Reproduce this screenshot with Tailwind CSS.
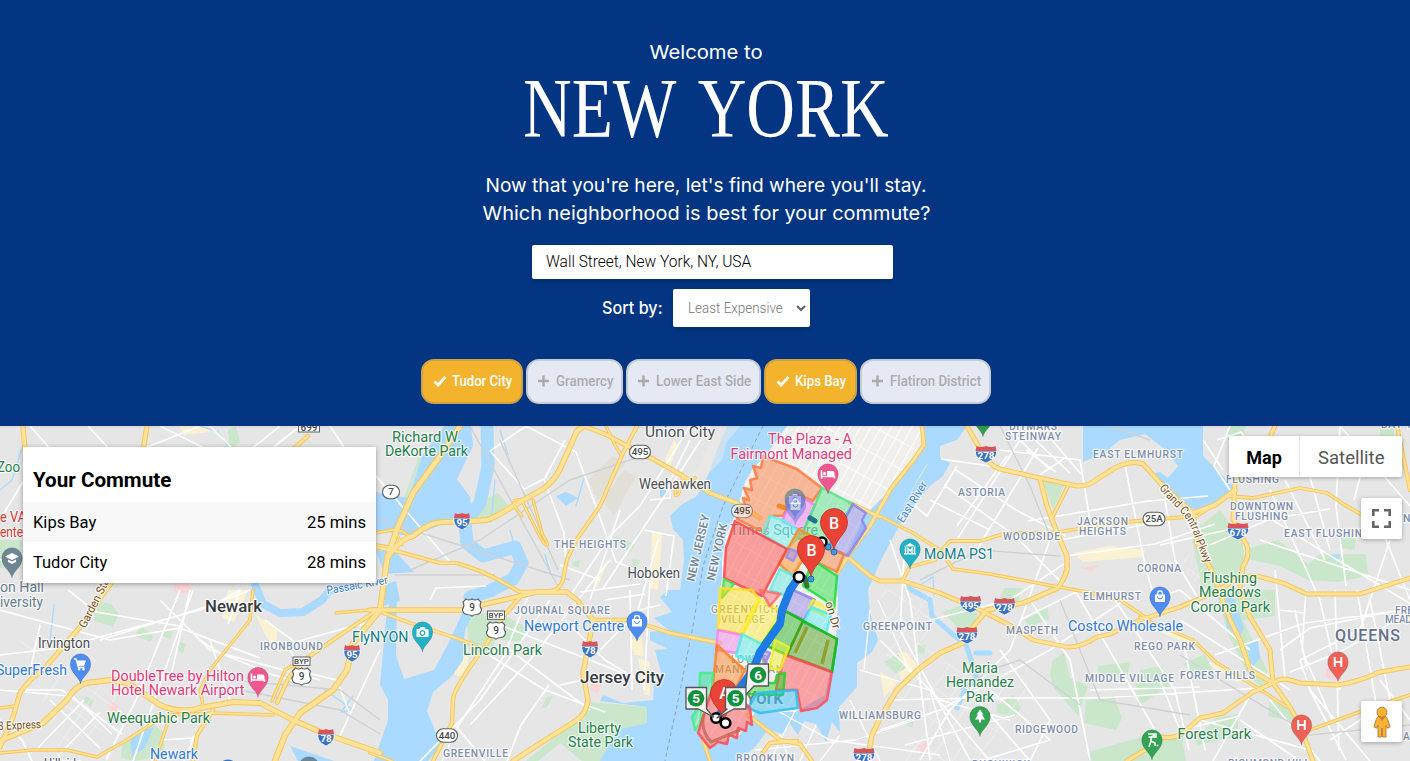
<!DOCTYPE html>
<html lang="en">
<head>
<meta charset="utf-8">
<title>Commute finder</title>
<script src="https://cdn.jsdelivr.net/npm/@tailwindcss/browser@4"></script>
</head>
<body class="h-[761px] w-[1410px] overflow-hidden flex flex-col bg-[#043582] font-['Roboto',sans-serif]">
<header class="h-[426px] shrink-0 flex flex-col items-center bg-[#043582] text-white">
  <p class="mt-[38px] ml-[2px] h-[30px] text-[19px] leading-[30px] font-['Inter',sans-serif] font-normal"><span class="fit inline-block whitespace-nowrap origin-center" data-w="113">Welcome to</span></p>
  <h1 class="-mt-[1px] ml-[2px] h-[83px] text-[84px] leading-[83px] font-['Liberation_Serif',serif]"><span class="fit inline-block whitespace-nowrap origin-center [word-spacing:10px]" data-w="366">NEW YORK</span></h1>
  <div class="mt-[22px] ml-[2px] flex flex-col items-center text-[19px] leading-[28px] font-['Inter',sans-serif] font-normal">
    <p><span class="fit inline-block whitespace-nowrap origin-center" data-w="441">Now that you're here, let's find where you'll stay.</span></p>
    <p><span class="fit inline-block whitespace-nowrap origin-center" data-w="448">Which neighborhood is best for your commute?</span></p>
  </div>
  <div class="mt-[17px] ml-[15px] w-[361px] h-[34px] bg-white rounded-[2px] shadow-md px-[14px] flex items-center text-[16px] font-light text-black"><span class="fit inline-block whitespace-nowrap origin-left" data-w="205">Wall Street, New York, NY, USA</span></div>
  <div class="mt-[10px] ml-[2px] flex items-center gap-[10px]">
    <span class="w-[61px] pt-[2px] text-[17px] font-['Inter',sans-serif] font-medium"><span class="fit inline-block whitespace-nowrap origin-left" data-w="61">Sort by:</span></span>
    <div class="w-[137px] h-[38px] bg-white rounded-[2px] shadow-md pl-[15px] pr-[4px] flex items-center justify-between text-[14px] font-light text-[#777]"><span class="fit inline-block whitespace-nowrap origin-left" data-w="95">Least Expensive</span>
      <svg width="10" height="8" viewBox="0 0 10 8" fill="none" stroke="#666" stroke-width="2.2"><path d="M1 2l4 4 4-4"/></svg></div>
  </div>
  <div class="mt-[32px] ml-[2px] flex gap-[3px] text-[14px] font-medium [&>div]:h-[45px] [&>div]:rounded-[13px] [&>div]:border-2 [&>div]:flex [&>div]:items-center [&>div]:pl-[10px] [&>div]:pb-[1px] [&>div]:gap-[5px]">
    <div class="w-[102px] bg-[#f4b32c] border-[#cda348]"><svg class="shrink-0" width="14" height="12" viewBox="0 0 14 12" fill="none" stroke="#fff" stroke-width="2.7"><path d="M1.5 6.5l3.6 3.5L12.5 2"/></svg><span class="fit whitespace-nowrap origin-left" data-w="60">Tudor City</span></div>
    <div class="w-[97px] bg-[#e4e9f4] border-[#c5cbd2] text-[#adadad]"><svg class="shrink-0 -ml-px" width="14" height="12" viewBox="0 0 14 12" fill="none" stroke="#aaa" stroke-width="2.5"><path d="M1 6h11M6.500 .5v11"/></svg><span class="fit whitespace-nowrap origin-left" data-w="57">Gramercy</span></div>
    <div class="w-[135px] bg-[#e4e9f4] border-[#c5cbd2] text-[#adadad]"><svg class="shrink-0 -ml-px" width="14" height="12" viewBox="0 0 14 12" fill="none" stroke="#aaa" stroke-width="2.5"><path d="M1 6h11M6.500 .5v11"/></svg><span class="fit whitespace-nowrap origin-left" data-w="95">Lower East Side</span></div>
    <div class="w-[93px] bg-[#f4b32c] border-[#cda348]"><svg class="shrink-0" width="14" height="12" viewBox="0 0 14 12" fill="none" stroke="#fff" stroke-width="2.700"><path d="M1.500 6.500l3.600 3.500L12.500 2"/></svg><span class="fit whitespace-nowrap origin-left" data-w="51">Kips Bay</span></div>
    <div class="w-[131px] bg-[#e4e9f4] border-[#c5cbd2] text-[#adadad]"><svg class="shrink-0 -ml-px" width="14" height="12" viewBox="0 0 14 12" fill="none" stroke="#aaa" stroke-width="2.500"><path d="M1 6h11M6.500 .5v11"/></svg><span class="fit whitespace-nowrap origin-left" data-w="91">Flatiron District</span></div>
  </div>
</header>

<main class="relative h-[335px] shrink-0 overflow-hidden">
<svg id="map" class="block" width="1410" height="335" viewBox="0 426 1410 335" font-family="Roboto, sans-serif">
  <defs>
    <pattern id="grid" width="9" height="24" patternUnits="userSpaceOnUse" patternTransform="translate(6 0) rotate(29)"><path d="M0 0V24M0 0H9" stroke="#fff" stroke-width="1.7"/></pattern>
    <pattern id="blocks" width="19" height="27" patternUnits="userSpaceOnUse" patternTransform="rotate(35)"><path d="M0 0V27M0 0H19" stroke="#fff" stroke-width="1.1"/></pattern>
    <path id="isle" d="M787 426L766 455 752 470 745 482 737 510 726 535 722 560 722 580 718 600 717 640 712 680 702 700 695 725 710 747 740 735 755 712 795 712 825 695 836 640 838 600 835 570 850 548 865 515 890 490 915 462 924 445 922 426Z"/>
    <g id="pin"><path d="M0 20C-1 13-10.300 9-10.300 0A10.300 10.300 0 0 1 10.300 0C10.300 9 1 13 0 20Z" fill="currentColor" stroke="#000" stroke-opacity=".12"/></g>
    <path id="gcp" d="M1159 488Q1166 497 1176 507 1190 521 1194 535 1198 549 1207 567"/>
  </defs>
  <rect y="426" width="1410" height="335" fill="#e6e6e6"/>
  <!-- commercial and urban tints -->
  <g fill="#fbf2d3">
    <path d="M180 426l25 0 5 6-26 3zM228 590h20l-14 32-12-4zM255 614l22 14 0 20-10-10zM455 655l14 2-4 20-10-2zM630 640l12-2 2 18-10-1zM638 658l12 4 0 34-6-2zM1073 553l36-7 36 4-2 7-60 5zM893 655l12-4 14 16-18 14zM880 672l18 10-14 16zM740 426l16 0-30 36-5-2zM665 460l9-20 4 5-9 24zM1140 616l54 22-4 7-50-22zM1205 662l14 2 22 15-3 4zM605 563l4-5-12 30-4-2zM652 532l10 2-4 56-8-2z"/>
  </g>
  <g fill="#f9d5d5"><path d="M174 583h16l2 12-18-3zM110 701l9 5-3 6-9-5zM593 681l9 3-4 9-8-3zM1326 668l12 3-3 10-9-3zM918 745l9-3 3 12-9 2zM1080 568l20-3-8 6z"/></g>
  <g fill="#e2dfd6"><path d="M588 480l24-24 14 6-28 38zM602 500l22-30 12 6-22 40z"/></g>
  <!-- parks -->
  <g fill="#cae7cc">
    <path d="M0 540h22v28H0zM228 430l8-4 4 16-10 8zM93 600l18 4 8 10-6 13-18-6zM141 626l12 9-2 7-16-6zM164 629l9 3-3 7-8-3zM180 642l6 2-3 9-5-2zM122 745l30-22 12 10 1 22-30 6-14-3zM86 696l8 5-4 6-7-6zM404 498l14-40 3 0-14 40zM475 518l13-20 10-5 10 12-18 12zM467 618l28-8 32 18-4 14-28-3-4 16-22-4zM547 697l6-1-6 11-6 1zM590 702l57 5v18l-29 5-16 31h-20l-22-18-22 18h-12l34-28 24-14zM615 536l20 8-4 8-19-10zM640 560l-10 25 3-26zM573 562l7-2-1 8-7-3zM1043 481l22 3-12 26zM1004 588h18l-4 14-18-4zM942 612l24-8 12 10-6 16-16-4zM1025 620l22-14 2 13-20 8zM1052 661l12-9 6 26 18 8-10 30-24-28-4-12zM1098 666l32-4-2 12-30 4zM1086 700l28-4 8 22-6 12-32-7zM1140 670l22-4 8 20-32 20-2-20zM1088 752l50-14 14-6v29h-60zM1195 530l25-20 22 30 4 30-20 20-24-2-10-50zM1215 590h60v26l-32 4 24 50-2 20-16-14-20-40zM1250 548l28-8 30 24 12-10 46 0 2 22-30 6-30-2-28-14-38-8zM1340 530l16 8-2 12-14-2zM1196 740l20-22 22-4 0 22-40 9zM1140 738h42l4 23h-46zM1270 700l22 8 2 14-26-6zM1183 664l22-10 10 22-16 4zM1228 426h18l-4 14-14 0zM1380 426h14v12h-14zM884 662l14-8 8 14-10 6zM908 720l6 0-2 7-5-2zM997 705l16-10 8 12-6 10-18-4zM918 645l8 0-2 9-6-1z"/>
  </g>
  <!-- water -->
  <g fill="#aadaff">
    <path d="M727 426H967L957 440 940 446 940 457 950 463 943 476 930 486 903 519 890 543 881 560 868 590 870 613 878 640 872 652 857 663 857 687 839 707 840 732 832 722 826 742 816 724 804 721 798 735 790 724 784 734 768 730 755 747 737 761H600L617 730 647 723 647 707 600 701 603 695 623 703 653 700 654 684 662 676 655 650 668 649 650 640 650 632 668 630 654 618 672 612 660 597 668 590 680 590 684 560 683 540 673 529 670 516 681 505 697 496 706 480 717 450Z"/>
    <path d="M460 426h11l2 20-16 33 13 18 2 19-30 8-24 11-18 0-24-6v-37l32 6 14-42 22-30zM376 494l12 2 10 18-8 18-14 0z"/>
    <path d="M386 620L392 590 397 590 396 655 404 679 434 670 447 646 460 618 470 590 480 600 465 630 463 660 452 676 433 692 427 711 433 725 440 747 428 761H374L388 720 388 700 380 685Z"/>
    <path d="M376 550l20 2 18 20-30 2zM382 585l14-4 4 20-20 6z"/>
    <path d="M1083 426H1203V456L1236 489 1215 506 1195 510 1180 502 1163 486 1152 474 1160 472 1168 478 1178 466 1166 450 1145 434 1120 440 1105 452 1083 462Z"/>
    <path d="M130 742l10-12 13-2-8 20-13 8zM290 746l44 15h-36zM1222 596l12 2 10 30-5 9-12-10zM1246 644l12-4 2 18-8 10zM556 496l10-4 12 6-12 8zM1330 555l10 0-2 5-8-2zM660 490h6v7h-6z"/>
  </g>
  <g fill="none" stroke="#aadaff" stroke-linecap="round" stroke-linejoin="round">
    <path stroke-width="13" d="M487 426L488 466 480 503 465 523 467 543 483 556 515 547 522 563 513 579 490 591 470 597"/>
    <path stroke-width="8" d="M255 585L263 604 280 613 303 612 322 600 330 590 347 588"/>
    <path stroke-width="5" d="M908 588L930 600 932 616 950 632 966 645 973 666 977 680 964 692 957 708M976 653L990 653"/>
    <path stroke-width="1.3" d="M584 478l-8 28M500 430l8 25M495 480l-4 42M510 530l4 14M640 532l-5 8M54 605l-4 36M325 690l28 20-12 2 12-16M200 426l18 6 10 14M0 490l12-10 10-32M545 555l6 20M920 585l13-8 1 18"/>
  </g>
  <use href="#isle" fill="#f0efec"/>
  <path d="M925 466L929 462 902 508 898 515Z" fill="#dfe3dd"/>
  <path d="M787 426H740L727 442 722 460 695 488 690 480 705 452 720 426Z" fill="#eceae5" opacity=".5"/>
  <!-- local streets -->
  <g fill="none" stroke="#fff" stroke-width="1.7" stroke-linejoin="round">
    <use href="#isle" fill="url(#grid)" stroke="none"/>
    <path d="M0 560L60 545M0 655L60 648 140 626 200 610 250 590M30 426L60 460M88 426l24 26M140 450l60-24M160 426l60 30M210 426l24 24M250 450l30-24M300 426l-30 24M330 426l40 60M0 520l30-50M0 610l110 30 70-12 80 30M180 590l-44 110-30 60M193 590l-60 171M160 600l50 50 110 30M100 640L215 604 240 590M190 590l-20 90M68 590l28 22 84 14M40 625l-14 65M22 690l40 0 60 44M50 700l50 48M68 692l44 42M84 700l-46 48M100 712l-42 44M0 690l70 6M220 700l-30 42M166 730l-14 31M210 640l20 60M200 640l22 15M213 650l60 25 36 10M265 620l30 22 44-12 32-8M285 642l18 30 34 8 12 32M380 650l-42 90M240 590l-12 34M160 740l34-2-10 23M0 720l22 20 10 21"/>
    <path d="M376 476L450 562M490 451l36-25 50 26 22 60 18 50 28 11M490 451l34 38 20-10 20 54 2 30M545 478l20-38M690 426l-50 80-30 30-40 60M710 426l-52 80-56 84M560 565l40 15M644 530l30 6-8 60M658 540l-20 70M620 510l-30 90M690 440l-20 40 0 18-20 2M430 600l6-12 50-2M528 596l-24 60-46 70-16 35M550 600l-70 100-60 61M610 560l-80 100-60 65M510 650l80 60M500 625l90 35 50 20M465 640l80 50 60 22M455 725l30 36M549 685l-28 40-14 36M565 620l40 40 36 22M560 685l46-10M580 592l60-8M630 590l2 100M650 580l-6 110M600 650l40-40 20-5M605 600l40-6"/>
    <path d="M941 459l42 6 36 6M956 470l60 40 50 26M944 485l70 50 50 50M930 500l60 30M905 520l10-14 12 10 30-50M1007 456l-50 70M1020 440l-62 98M1038 448l-60 100M1015 435l35 35M1030 435l40 38M1045 432l36 42M1000 450l80 10 10 60M1026 450l30 22M1065 458l-30 20M1028 521l120-20 60-5M1060 540l110-20M1065 556l90-12 60-20M1125 465l20 100 14 50M1165 500l10 60 30 50M890 540l20 60 20 160M905 540l-5 90 70 130M880 640l60 60 70 20M1050 540l-40 110-60 60-30 50M1070 560l-60 40-80 20M1030 600l40 60 20 100M890 700l80-2 130 0 160-10M880 730l60-20 110-60 90-60M930 690l60 71M960 680l70 81M990 690l60 50-70 21M905 745l110-30M1075 590l80 140M1000 650l50 70-20 41M1080 590l-60 30M1115 600l60 90 14 60M1090 690l110-3M1230 426l-16 40 20 30 80 50 100 60M1300 440l30 110M1270 490l50 110 20 90M1285 480l40 80M1340 426l-4 80 10 80M1210 545l60-26 60-10M1160 545l80-18M1260 540l60 20 90 30M1370 440l-16 60M1370 500l40 100M1390 540l-30 90-60 30M1275 570l10 110M1295 610l12 60M1306 590l-4 60 30 70M1335 590l4 160M1357 590l20 120M1280 610l24 3M1215 655l90-32 100-13M1280 650l30-22 100-20M1290 672l50-20 70-40M1185 650l20 100M1160 680l20 50 60-14M1200 720l110 30M1253 690l-40 71M1240 720l60 41M1270 700l50 61M1310 690l60 71M1300 660l10 30 36 70M1150 600l30-10 70 60M1180 620l110 70M1380 680l30 40M1370 600l20 100-60 40M1340 426l70 80M1217 440l24-8 20 30M1203 440l20 30"/>
    <path stroke-width="1.3" d="M740 690l90 50M770 761l30-60M800 761l16-36M840 735l-20 26M850 700l30 61M860 670l70 20 20 71M870 610l-6 60M878 600l36 80M755 750l100-10 60-20M780 735l10 26M830 740l110 15"/>
  </g>
  <path d="M1170 540l40 30-10 20zM880 590H935V700H890ZM940 660L1030 690 980 761H900ZM20 640L90 650 130 720 60 750Z" fill="url(#blocks)" opacity=".55"/>
  <!-- railways and borders -->
  <g fill="none" stroke="#cfd2d5" stroke-width="1.4">
    <path d="M470 426L560 590M500 440l58 130M380 520l190 60M230 680l110 10 40 30M395 575l100 0M240 690l100 20 40 24M1000 426l30 60 20 50M920 580l60-30 80 6M1060 600l40 100 90 15M1180 655l130 80 100-10M1150 440l-40-14M960 690l30-20 30-10 60 45M410 570l70-30 90-60 66-22"/>
    <path stroke="#8fa2b3" stroke-dasharray="4 3" stroke-width="1" d="M763 426l-20 40-20 40-20 60-10 60-14 70-14 65"/>
  </g>
  <g id="roads" fill="none" stroke-linejoin="round" stroke-linecap="round"></g>

  <!-- neighbourhood areas -->
  <g id="labels-under"></g>
  <g id="zones" stroke-width="2.5" stroke-linejoin="round" fill-opacity=".47" stroke-opacity=".85"></g>
  <g fill="none" stroke-linecap="round" stroke-width="5"><path stroke="#ef8a2b" d="M779 506l6 2"/><path stroke="#23728f" d="M810 518l5 3"/><path stroke="#337735" d="M805 578l2 8"/></g>
  <path d="M799 577L790 590 782 610 780 624 760 652 753 670 740 688 717 718" fill="none" stroke="#1c7be4" stroke-width="8" stroke-linejoin="round"/>
  <g id="labels"></g>
  <g id="pois"></g>

  <!-- commute markers -->
  <g fill="#3b9be0" stroke="#1f6fa8"><circle cx="828" cy="547" r="3"/><circle cx="834" cy="552" r="3"/><circle cx="811" cy="579" r="3"/><circle cx="803" cy="578" r="3"/></g>
  <g fill="#fff" stroke="#000" stroke-width="2.6"><circle cx="822" cy="542" r="4.500"/><circle cx="799" cy="577" r="5"/></g>
  <g fill="#ea4335" stroke="#b9302a" stroke-width=".8">
    <path d="M834 550C832 538 820.500 534 820.500 522A13.500 13.500 0 0 1 847.500 522C847.500 534 836 538 834 550Z"/>
    <path d="M811 577C809 565 797.500 561 797.500 549A13.500 13.500 0 0 1 824.500 549C824.500 561 813 565 811 577Z"/>
    <path d="M724 721C722 709 710.500 705 710.500 693A13.500 13.500 0 0 1 737.500 693C737.500 705 726 709 724 721Z"/>
  </g>
  <g fill="#fff" font-size="16" font-weight="500" text-anchor="middle"><text x="834" y="528.500">B</text><text x="811.500" y="555.500">B</text><text x="724.500" y="699">A</text></g>
  <g fill="#fff" stroke="#000" stroke-width="2.600"><circle cx="716" cy="718" r="4.800"/><circle cx="725.500" cy="723" r="4.800"/></g>
  <g fill="#f3f3f3" stroke="#555" stroke-width="1.300" stroke-linejoin="round">
    <path d="M748 664h20.500v22H754l-12 13 4-13z"/>
    <path d="M686 687.500h20.500V709l7 8-15-8H686z"/>
    <path d="M725.500 687.500h20.500V709H734l-17 9 10-9h-1.500z"/>
  </g>
  <g fill="#12913f"><circle cx="758" cy="675" r="8.300"/><circle cx="696" cy="698.300" r="8.300"/><circle cx="735.500" cy="698.300" r="8.300"/></g>
  <g fill="#fff" font-size="13.500" font-weight="700" text-anchor="middle"><text x="758" y="680">6</text><text x="696" y="703">5</text><text x="735.500" y="703">5</text></g>
  <path d="M0 426H1410V428H0Z" fill="#000" opacity=".04"/>
</svg>

<section class="absolute left-[23px] top-[21px] w-[353px] h-[136px] bg-white shadow-[0_1px_5px_rgba(0,0,0,.35)] flex flex-col text-black">
  <h2 class="h-[55px] shrink-0 pl-[10px] pt-[10px] flex items-center text-[20px] font-bold"><span class="fit whitespace-nowrap origin-left" data-w="138">Your Commute</span></h2>
  <div class="h-[40px] px-[10px] pt-[1px] flex items-center justify-between bg-[#f8f8f8] text-[16px]"><span class="fit whitespace-nowrap origin-left" data-w="63">Kips Bay</span><span class="fit whitespace-nowrap origin-right" data-w="59">25 mins</span></div>
  <div class="h-[41px] px-[10px] flex items-center justify-between text-[16px]"><span class="fit whitespace-nowrap origin-left" data-w="74">Tudor City</span><span class="fit whitespace-nowrap origin-right" data-w="59">28 mins</span></div>
</section>
<div class="absolute left-[1229px] top-[10px] flex h-[41px] w-[173px] rounded-[2px] bg-white text-[18px] shadow-[0_1px_4px_rgba(0,0,0,.3)]">
  <div class="w-[71px] flex items-center justify-center border-r border-[#e8e8e8] pt-[1px] font-bold text-black"><span class="fit whitespace-nowrap" data-w="36">Map</span></div>
  <div class="flex-1 pt-[1px] flex items-center justify-center text-[#565656]"><span class="fit whitespace-nowrap" data-w="66">Satellite</span></div>
</div>
<div class="absolute left-[1361px] top-[72px] size-[41px] flex items-center justify-center rounded-[2px] bg-white shadow-[0_1px_4px_rgba(0,0,0,.3)]">
  <svg width="19" height="19" viewBox="0 0 19 19" fill="none" stroke="#666" stroke-width="2.600"><path d="M1.300 7V1.300H7M12 1.300h5.700V7M17.700 12v5.700H12M7 17.700H1.300V12"/></svg>
</div>
<div class="absolute left-[1361px] top-[275px] size-[41px] flex items-center justify-center rounded-[2px] bg-white shadow-[0_1px_4px_rgba(0,0,0,.3)]">
  <svg width="18" height="32" viewBox="0 0 18 32" fill="#f9b233" stroke="#a87a3a" stroke-width=".9"><path d="M5 10.500h8l1.800 3L17 21l-2.500 1.200L13 19.500V31H9.700L9 22l-.7 9H5V19.500L3.500 22.200 1 21l2.200-7.500Z"/><path d="M5.500 10.500h7L9 15Z" fill="#e1782b" stroke="none"/><circle cx="9" cy="6.200" r="5"/></svg>
</div>
</main>

<script>
const el = (parent, tag, attrs, text) => {
  const n = document.createElementNS('http://www.w3.org/2000/svg', tag);
  for (const k in attrs) n.setAttribute(k, attrs[k]);
  if (text !== undefined) n.textContent = text;
  (typeof parent === 'string' ? document.getElementById(parent) : parent).appendChild(n);
  return n;
};
const road = (d, w) => ({ d: 'M' + d, w });
const roads = [
  road('23 426L25 450',5), road('147 426L143 450',5), road('308 436L292 450',4),
  road('460 426L440 456 413 493 397 529 387 559 382 596 380 610 353 643 347 670 333 690 300 713 285 735 275 761',6),
  road('387 559Q398 540 413 536 430 522 443 522T487 520Q500 515 513 506L543 489Q555 480 560 469L577 431 584 426',5.5),
  road('584 426L605 434 627 446 653 459 683 476 710 493 737 503 760 518',4.5),
  road('637 426L623 453 600 506 577 539 567 559 563 580Q560 590 550 591L520 592 497 579 480 571 457 563 440 563 400 552 370 546',3.8),
  road('376 533L392 530 402 531 412 538',3), road('376 545L395 548',3), road('395 530L402 545',2.5),
  road('522 516Q510 502 516 500 522 498 524 505L540 537Q546 547 547 545 549 544 543 536L533 500',2.8),
  road('683 476Q680 495 677 495 674 498 676 484L695 478',3.2),
  road('606 426L615 445 621 455',3),
  road('370 610L460 610Q485 604 503 600L537 592 567 592 577 600 593 620 587 653 583 673 588 700Q586 714 577 720L550 737 513 761',5),
  road('593 620L630 620 670 633 720 643',4),
  road('520 597L503 617 487 643 470 667Q453 692 453 700L452 723 433 761',4),
  road('383 613L410 623 453 637 475 645',3.5), road('370 753L392 761',3),
  road('0 747L13 717 20 693Q30 678 43 670L80 627 98 601 112 582',4.8),
  road('0 741L43 723 67 700Q77 682 95 682L110 680Q128 681 138 690L160 705Q180 714 200 708L233 702 260 703 293 720 323 733 380 753',5.5),
  road('277 703L288 679 300 663 333 640 377 610',4), road('272 701L285 670 302 660',3),
  road('253 590L250 620 210 670 200 690 203 705',3),
  road('0 753L33 750 67 750 97 757 127 740 153 723 170 715 213 713 273 715',3.2),
  road('213 710L197 735 193 761',4), road('170 716L155 761',3), road('0 708L15 706',3), road('336 613L380 609',3),
  road('967 426L980 449Q988 465 1000 469L1040 478 1077 486Q1090 486 1097 479L1115 468Q1130 460 1143 464L1163 486 1193 513Q1196 530 1197 543L1213 573 1230 620 1240 640 1250 670 1273 683',4.8),
  road('1040 479L1047 506 1057 533 1067 556 1067 570Q1060 590 1053 590L1023 603 987 610 973 627 963 643 940 653 920 668 897 690 880 718 872 735 867 761',5),
  road('880 516L913 533 940 550 953 569 990 574 1053 586 1087 592 1120 600 1145 617',3.2),
  road('850 559L870 576 880 581 903 581 940 593 980 610 1013 627 1033 640 1067 647Q1080 648 1097 637L1110 634 1140 620 1180 607 1215 592 1240 577 1257 576 1283 583 1307 594 1360 594 1410 578',4.4),
  road('903 579L910 567 935 560 943 549 950 541 980 541 1007 533 1053 533 1113 523 1197 516 1227 496 1253 498 1300 488 1327 493 1345 505 1364 516',3.4),
  road('1275 426L1260 460 1235 483 1233 519 1247 546Q1250 556 1243 566L1240 590 1250 617 1270 650 1273 683 1290 707 1300 725 1313 761',4.6),
  road('1273 683Q1282 677 1290 680L1300 683 1337 685Q1355 683 1380 672L1410 667',4.6),
  road('1273 683L1253 692 1223 713 1200 718 1183 733Q1175 739 1160 737L1150 747 1127 761',4.6),
  road('1140 617L1193 640 1217 663 1253 685 1287 707',3), road('1410 695L1373 707 1310 730',3.2),
  road('1397 426L1410 490',4), road('1068 486L1053 516',3.6), road('1193 513L1215 505 1235 490',5),
  road('922 426L924 445 912 462 890 490 880 508 870 526 850 553 838 572',4.2),
  road('850 503L880 517',4), road('748 715L780 740 800 744 812 761',4), road('757 761L770 743 797 741',4), road('703 740L710 761',3.5)
];
for (const r of roads) el('roads','path',{d:r.d,stroke:'#f6c659','stroke-width':r.w+0.4});
for (const r of roads) el('roads','path',{d:r.d,stroke:'#fde298','stroke-width':Math.max(r.w-1.5,1.3)});

const zones = [
 ['#ff7a3c','763,456 797,469 822,488 813,501 795,493 783,516 770,516 765,533 737,519 741,507 746,509 743,498 749,500 744,488 752,490 750,480 757,478 753,466 761,468'],
 ['#e97cf5','795,493 815,505 803,532 782,521'],
 ['#4fe585','822,488 853,504 830,548 797,538 803,532 815,505'],
 ['#8b86ee','853,504 866,513 862,520 866,528 848,556 828,547'],
 ['#63f0ee','770,516 785,521 802,533 787,549 762,534'],
 ['#ff8b1a','799,529 815,538 793,576 779,564'],
 ['#9a8cf0','790,549 798,552 793,561 786,557'],
 ['#ff4444','735,521 787,549 762,596 724,578 726,548'],
 ['#5fe9e2','780,569 797,577 787,596 770,590'],
 ['#ff7c3a','817,546 844,554 837,572 813,560'],
 ['#1fdc3c','813,560 837,576 834,610 825,600 803,586'],
 ['#4ddb50','724,579 734,584 722,598'],
 ['#ffe11c','720,588 752,590 760,600 743,634 718,630'],
 ['#ffef3c','758,599 780,610 762,644 740,634'],
 ['#ff6a6a','760,590 780,594 770,606'],
 ['#8c84e8','793,590 815,600 804,620 785,611'],
 ['#f7ee32','813,600 829,609 823,615 809,608'],
 ['#52ebf0','811,607 831,615 826,633 804,623'],
 ['#1fb51c','785,611 803,621 787,655 762,644 780,625'],
 ['#46a018','803,621 837,639 832,672 787,655'],
 ['#ff4c55','785,655 832,672 827,700 817,708 801,711 797,690 776,690 780,670'],
 ['#f184ef','718,630 742,635 737,653 716,650'],
 ['#52edf1','742,634 762,644 753,662 736,656'],
 ['#9b87e8','762,650 770,653 765,664'],
 ['#eef22b','775,640 789,647 785,657 780,670 770,668'],
 ['#ff7f1d','717,645 745,670 736,688 713,683'],
 ['#27ce28','750,683 775,683 777,675 785,673 783,695 748,694'],
 ['#2dbdf0','757,693 796,690 798,708 760,713 748,708'],
 ['#4bea86','700,673 713,673 711,694 702,707 700,724 695,730 692,717 699,706'],
 ['#ff4b52','711,693 730,690 750,708 752,725 747,722 746,731 738,728 737,738 729,735 727,744 718,742 710,748 698,733 704,714']
];
for (const [c,p] of zones) el('zones','polygon',{points:p,fill:c,stroke:c});
el('zones','path',{d:'M807 627L795 653M828 640L822 664',stroke:'#8b9c20','stroke-width':3.5,fill:'none'});
el('zones','path',{d:'M785 611L837 639 832 672M785 611L762 644',stroke:'#15bd20','stroke-width':2.5,fill:'none'});
el('zones','path',{d:'M704 714Q700 730 711 742L740 730',stroke:'#c46a5c','stroke-width':3,fill:'none'});

const kind = {
  park:['#26804a',14.3,400], town:['#4b5057',14.3,400], city:['#373c43',16.8,500], area:['#7d8eab',10.3,500],
  shop:['#2f79dc',14.3,400], hotel:['#e5397b',14.3,400], teal:['#12808a',14.3,400], grey:['#667d8c',14.3,400],
  red:['#d43a31',14.3,400], road:['#7a5126',11.5,400], water:['#3b82c9',11.5,400], under:['#6f9299',15,400],
  state:['#73828f',11.5,500], boro:['#63728a',16,500], dim:['#a7a18c',10.3,500], faded:['#6d8794',18,500]
};
const L = [
 ['Richard W.',392,461,441.5,'park'],['DeKorte Park',385,468,456,'park'],['Union City',645,715,437,'town'],
 ['Weehawken',639,711,489,'town'],['Hoboken',627.5,680,577.5,'town'],['THE HEIGHTS',554,626,548,'area'],
 ['JOURNAL SQUARE',514,610,614,'area'],['Newport Centre',524,624,631,'shop'],['Jersey City',580,664,683,'city'],
 ['Lincoln Park',463,542,655,'park'],['Liberty',578,621,733,'park'],['State Park',568,633,747,'park'],
 ['GREENVILLE',443,508,757,'area'],['FlyNYON',352,408.5,642,'teal'],['Newark',205,262,611.5,'city'],
 ['IRONBOUND',260,323,650,'area'],['DoubleTree by Hilton',111,244,680.5,'hotel'],['Hotel Newark Airport',111,244.5,695,'hotel'],
 ['Weequahic Park',107,210,723,'park'],['Newark',150,198,758.5,'shop'],['Irvington',38,90,648,'town'],
 ['SuperFresh',-4,67,675,'shop'],['iversity',0,43,607,'grey'],['on Hall',0,44,592,'grey'],['Zoo',-3,20,471.5,'park'],
 ['e VA',0,26,522,'red'],['ente',0,23,536.5,'red'],['Hillside',44,82,769,'town'],
 ['The Plaza - A',768,852,444,'hotel'],['Fairmont Managed',730.5,852,458.5,'hotel'],
 ['DITMARS',1009,1057,430,'area'],['STEINWAY',1005,1061,439.7,'area'],['EAST ELMHURST',1093,1183,458,'area'],
 ['ASTORIA',958,1005,495.5,'area'],['WOODSIDE',1003,1060,540,'area'],['JACKSON',1077,1128,525,'area'],['HEIGHTS',1079,1126,535.3,'area'],
 ['CORONA',1137,1181,572.3,'area'],['ELMHURST',1083,1141,600,'area'],['GREENPOINT',863,932,630,'area'],['MASPETH',1006,1058,634,'area'],
 ['Costco Wholesale',1068,1183,630.5,'shop'],['REGO PARK',1134,1195,650,'area'],['MIDDLE VILLAGE',1085,1174,682,'area'],
 ['FOREST HILLS',1180,1255,679,'area'],['RIDGEWOOD',1015,1078,733,'area'],['BUSHWICK',972,1030,768,'area'],
 ['Maria',962,998,673,'park'],['Hernandez',946,1014,687,'park'],['Park',966,994,701.5,'park'],
 ['WILLIAMSBURG',839,921,719,'area'],['BROOKLYN',736,794,762,'area'],['MoMA PS1',924,994,559,'teal'],
 ['Flushing',1203,1257,583,'park'],['Meadows',1199,1261,597,'park'],['Corona Park',1190.5,1270,611.5,'park'],
 ['QUEENS',1335,1400,641,'boro'],['FRE',1395,1413,613.5,'area'],['MEAD',1385,1412,623,'area'],
 ['Forest Park',1177.5,1251,739,'park'],['RICHMOND HILL',1228,1310,767,'area'],['FLUSHING',1226,1279,483,'area'],
 ['DOWNTOWN',1230,1293,509.7,'area'],['FLUSHING',1235,1288,519.5,'area'],['EAST FLUSHING',1284,1370,537,'area'],
 ['N',1403,1411,522,'area'],['A',1403,1410,740,'area'],['BAY T',1381,1412,428,'area'],
 ['NEW JERSEY',664,732,552,'state',-77],['NEW YORK',688,746,556,'state',-77],
 ['East River',889,935,506,'water',-58],['Garden Sta',67,121,607,'road',-63],['8 Express',-2,41,729,'road',-3],
 ['Passaic River',326,388,589,'water',-10],['on Dr',819,847,619,'road',74]
];
const under = [['Times Square',730,818,534.5,'under'],['GREENWICH',711,778,613,'dim'],['VILLAGE',721,765,623,'dim'],
 ['LOWER',731,768,663,'dim'],['MANHATTAN',715,783,673,'dim'],['York',745,783,704,'faded']];
const label = (g,[t,x0,x1,y,k,rot]) => {
  const [fill,size,weight] = kind[k];
  const a = {x:x0,y,fill,'font-size':size,'font-weight':weight,textLength:x1-x0,stroke:'#fff','stroke-width':2.4,'stroke-opacity':.75,'stroke-linejoin':'round','paint-order':'stroke'};
  if (!['area','dim','boro','state'].includes(k)) a.lengthAdjust = 'spacingAndGlyphs';
  if (rot) a.transform = `rotate(${rot} ${(x0+x1)/2} ${y-4})`;
  el(g,'text',a,t);
};
under.forEach(l => label('labels-under',l));
L.forEach(l => label('labels',l));
const gc = el('labels','text',{fill:'#7a5126','font-size':11.5,stroke:'#fff','stroke-width':2.4,'paint-order':'stroke'});
el(gc,'textPath',{href:'#gcp',textLength:90,lengthAdjust:'spacingAndGlyphs'},'Grand Central Pkwy');

// interstate shields
for (const [t,x,y] of [['95',462,521],['95',352,653],['78',326,737],['78',590,649],['495',970.5,604],['278',1004.5,606],['278',967,635],['278',986,454],['278',864,756],['678',1238,531]]) {
  const w = t.length > 2 ? 10.5 : 8;
  el('pois','path',{d:`M${x-w} ${y-3}C${x-w-1} ${y+4} ${x-4} ${y+7} ${x} ${y+9}C${x+4} ${y+7} ${x+w+1} ${y+4} ${x+w} ${y-3}Z`,fill:'#3d73c2',stroke:'#fff','stroke-width':.8});
  el('pois','path',{d:`M${x-w} ${y-3}L${x-w+1} ${y-8}Q${x-w/2} ${y-6} ${x} ${y-8}Q${x+w/2} ${y-6} ${x+w-1} ${y-8}L${x+w} ${y-3}Z`,fill:'#d9535a'});
  el('pois','text',{x,y:y+4.8,fill:'#fff','font-size':9.8,'font-weight':700,'text-anchor':'middle'},t);
}
// state and US route markers
for (const [t,x,y,w] of [['7',391,492,17],['495',640,452,21],['440',447,735.5,21],['25A',1154,519,22],['495',742,511,21]]) {
  el('pois','rect',{x:x-w/2,y:y-6.7,width:w,height:13.4,rx:6.7,fill:'#fff',stroke:'#5c6064','stroke-width':1.1,opacity:x===742?.6:1});
  el('pois','text',{x,y:y+3.4,fill:'#44484c','font-size':9.8,'font-weight':500,'text-anchor':'middle'},t);
}
for (const [x,y,byp] of [[301.5,676,1],[472,607,0],[496,630,1]]) {
  el('pois','path',{d:`M${x-6} ${y-8}q3 2 6 0q3 2 6 0q2 2 3 3q-2 4 .5 7q0 5-5 5.500q-2 0-4.500 1.500q-2.500-1.500-4.500-1.500q-5-.5-5-5.500q2.500-3 .5-7z`,fill:'#fff',stroke:'#5c6064','stroke-width':1.2});
  el('pois','text',{x,y:y+4,fill:'#44484c','font-size':10,'font-weight':500,'text-anchor':'middle'},'9');
  if (byp) { el('pois','rect',{x:x-8.5,y:y-19,width:17,height:8.4,fill:'#fff',stroke:'#5c6064'});
    el('pois','text',{x,y:y-11.8,fill:'#44484c','font-size':8,'font-weight':500,'text-anchor':'middle'},'BYP'); }
}
el('pois','rect',{x:298.5,y:419,width:21,height:13,fill:'#fff',stroke:'#5c6064'});
el('pois','text',{x:309,y:430.5,fill:'#44484c','font-size':10,'font-weight':500,'text-anchor':'middle'},'699');

const glyph = {
  bag:'<path fill="#fff" d="M-5-2.500H5V5H-5Z"/><path fill="none" stroke="#fff" stroke-width="1.300" d="M-2.500-2V-3.500A2.500 2.500 0 0 1 2.500-3.500V-2"/><path fill="none" stroke="#4f8cf0" d="M-2.500-.5A2.500 2.500 0 0 0 2.500-.5"/>',
  cart:'<path fill="#fff" d="M-4-3.500H5.500L3.500 2H-2.800Z"/><path fill="none" stroke="#fff" stroke-width="1.300" d="M-6.500-5H-4.500L-2 3.500H4"/><circle cx="-1.500" cy="5.300" r="1.200" fill="#fff"/><circle cx="3" cy="5.300" r="1.200" fill="#fff"/>',
  bed:'<path fill="none" stroke="#fff" stroke-width="1.600" d="M-6.500-4V4.500M-6.500 2.500H6.500V4.500"/><path fill="#fff" d="M-1-3H4.500Q6.500-3 6.500-1V2H-1Z"/><circle cx="-3.500" cy="-.5" r="1.600" fill="#fff"/>',
  cam:'<path fill="#fff" d="M-6-3H-3L-2-5H2L3-3H6V5H-6Z"/><circle cy="1" r="2.300" fill="#fff" stroke="#22b1c4" stroke-width="1.300"/>',
  cap:'<path fill="#fff" d="M-7-1.500L0-5 7-1.500 0 2ZM-4 1.500V4L0 6 4 4V1.500L0 3.500Z"/>',
  museum:'<path fill="#fff" d="M-6-2.500L0-6 6-2.500ZM-6 4H6V5.500H-6Z"/><path fill="none" stroke="#fff" stroke-width="1.400" d="M-4.500-2V4M4.500-2V4M-2 4V-.5L0 2 2-.5V4"/>',
  tree:'<path fill="#fff" d="M0-7L3.500-2H2L5 3H1V6H-1V3H-5L-2-2H-3.500Z"/>',
  golf:'<path fill="none" stroke="#fff" stroke-width="1.500" d="M-4-6H4V-3H-3.500M-1-3L3-5M-1-3L-1 1-3 7M-1 1L3 3V6"/><circle cx="5.500" cy="5.500" r="1" fill="#fff"/>',
  hosp:'<path fill="none" stroke="#fff" stroke-width="2" d="M-3.300-5V5M3.300-5V5M-3.300 0H3.300"/>', none:''
};
for (const [x,y,c,g,o] of [[80.5,664,'#4f8cf0','cart'],[258,677.5,'#f0568f','bed'],[422.5,632,'#22b1c4','cam'],[637,621.5,'#4f8cf0','bag'],
  [12,558,'#6f8794','cap'],[828,474,'#f0568f','bed'],[910,549,'#22b1c4','museum'],[1160,597,'#4f8cf0','bag'],[980,716.5,'#34a353','tree'],
  [1152,740,'#34a353','golf'],[1338,662,'#ee6058','hosp'],[1301.5,725,'#ee6058','hosp'],[983,417,'#2f9e4a','none'],[309,767,'#6f8794','none'],[228,770,'#2f79dc','none'],
  [795,499,'#4c8194','cam',.65],[795.500,505,'#6e7df0','bag',.55]]) {
  const n = el('pois','g',{transform:`translate(${x} ${y})`,color:c,opacity:o||1});
  n.innerHTML = '<use href="#pin"/>' + glyph[g];
}

// keep interface lettering at its column measure, whatever its natural width
const fit = n => { if (n.offsetWidth) n.style.transform = `scaleX(${n.dataset.w / n.offsetWidth})`; };
const watcher = new ResizeObserver(list => list.forEach(e => fit(e.target)));
document.querySelectorAll('.fit').forEach(n => { fit(n); watcher.observe(n); });
addEventListener('load', () => document.querySelectorAll('.fit').forEach(fit));
document.fonts.ready.then(() => document.querySelectorAll('.fit').forEach(fit));
</script>
</body>
</html>
